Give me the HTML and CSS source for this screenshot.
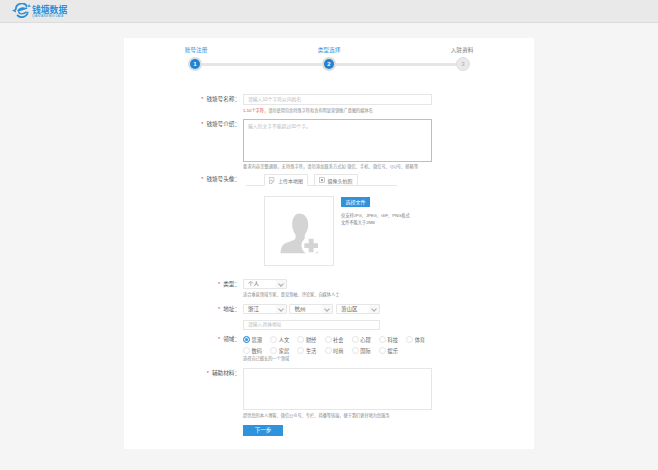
FILE: index.html
```html
<!DOCTYPE html>
<html lang="zh-CN">
<head>
<meta charset="utf-8">
<title>钱塘数据</title>
<link rel="stylesheet" href="styles.css">
</head>
<body>
<header class="topbar">
  <div class="logo">
    <svg class="logo-mark" viewBox="0 0 30 24" width="19" height="15" aria-hidden="true">
      <path d="M6 11 A9.500 9.500 0 0 1 24 6" fill="none" stroke="#2a8fd8" stroke-width="2.800"/>
      <path d="M25 14 A9.500 9.500 0 0 1 8 19" fill="none" stroke="#2a8fd8" stroke-width="2.800"/>
      <path d="M9 13 L24 8 M10 14 C12 19 19 18 23 14 M9 13 C11 8 18 7 21 9" fill="none" stroke="#2a8fd8" stroke-width="2.200"/>
      <path d="M0 12 L6 9 L6 15 Z M27 2 L30 6 L25 6 Z" fill="#2a8fd8"/>
    </svg>
    <div class="logo-text">
      <span class="logo-cn">钱塘数据</span>
      <span class="logo-en">QIANTANG BIG DATA</span>
    </div>
  </div>
</header>

<main class="card">
  <div class="step-labels">
    <span class="step-label active">账号注册</span>
    <span class="step-label active">类型选择</span>
    <span class="step-label">入驻资料</span>
  </div>
  <div class="step-track">
    <span class="dot active">1</span><span class="bar"></span>
    <span class="dot active">2</span><span class="bar"></span>
    <span class="dot">3</span>
  </div>

  <form class="form">
    <div class="row row-name">
      <label class="label"><i>*</i>钱塘号名称：</label>
      <div>
        <div class="input wide">请输入10个字符以内姓名</div>
        <p class="hint hint-name"><b>1-10个字符</b>，请勿使用包含特殊字符和含有明显营销推广意图的媒体名</p>
      </div>
    </div>

    <div class="row row-intro">
      <label class="label"><i>*</i>钱塘号介绍：</label>
      <div>
        <div class="area focus">输入的文字不能超过30个字。</div>
        <p class="hint hint-intro">要求内容完整通顺，无特殊字符，请勿添加联系方式如 微信、手机、微信号、QQ号、邮箱等</p>
      </div>
    </div>

    <div class="row row-avatar">
      <label class="label"><i>*</i>钱塘号头像：</label>
      <div>
        <div class="tabs">
          <span class="tab current">
            <svg viewBox="0 0 8 8" width="7" height="7" aria-hidden="true"><path d="M.5 2.500v-2h5v5h-2M.5 3.500h3v4h-3z" fill="none" stroke="#999" stroke-width=".6"/></svg>
            上传本地图</span>
          <span class="tab">
            <svg viewBox="0 0 8 8" width="6" height="6" aria-hidden="true"><rect x=".5" y="1" width="7" height="6.500" fill="none" stroke="#999" stroke-width=".7"/><circle cx="4" cy="4.200" r="1.500" fill="#999"/></svg>
            摄像头拍照</span>
        </div>
        <div class="upload">
          <div class="avatar">
            <svg viewBox="0 0 70 70" width="68" height="68" aria-hidden="true">
              <path d="M35 17c6 0 9.500 5 9.500 11 0 4-1 7-3 10-1 2-1 5 1 6 5 2 9 3 11 5 2 2 1 6 1 9H16c0-4 1-7 3-9 2-2 7-3 11-5 2-1 2-4 1-6-2-3-3-6-3-10 0-6 3-11 7-11z" fill="#d4d4d4"/>
              <circle cx="47" cy="50" r="9.500" fill="#fff"/>
              <path d="M45 43h5v4.500h4.500v5H50V57h-5v-4.500h-4.500v-5H45z" fill="#d4d4d4"/>
            </svg>
          </div>
          <div class="upload-side">
            <span class="btn-file">选择文件</span>
            <p class="spec">仅支持JPG、JPEG、GIF、PNG格式<br>文件不能大于2MB</p>
          </div>
        </div>
      </div>
    </div>

    <div class="row row-type">
      <label class="label"><i>*</i>类型：</label>
      <div>
        <div class="select">个人<span class="caret"></span></div>
        <p class="hint hint-type">适合垂直领域专家、意见领袖、评论家、自媒体人士</p>
      </div>
    </div>

    <div class="row row-addr">
      <label class="label"><i>*</i>地址：</label>
      <div>
        <div class="selects">
          <div class="select">浙江<span class="caret"></span></div>
          <div class="select">杭州<span class="caret"></span></div>
          <div class="select">萧山区<span class="caret"></span></div>
        </div>
        <div class="input addr">请输入具体地址</div>
      </div>
    </div>

    <div class="row row-field">
      <label class="label"><i>*</i>领域：</label>
      <div>
        <div class="radios">
          <span class="radio on">思潮</span><span class="radio">人文</span><span class="radio">财经</span><span class="radio">社会</span><span class="radio">心理</span><span class="radio">科技</span><span class="radio">体育</span>
          <span class="radio">数码</span><span class="radio">家居</span><span class="radio">生活</span><span class="radio">时尚</span><span class="radio">国际</span><span class="radio">娱乐</span>
        </div>
        <p class="hint hint-field">选择自己擅长的一个领域</p>
      </div>
    </div>

    <div class="row row-extra">
      <label class="label"><i>*</i>辅助材料：</label>
      <div>
        <div class="area plain"></div>
        <p class="hint hint-extra">提供您的本人博客、微信公众号、专栏、荷播等链接，便于我们更好地为您服务</p>
        <span class="btn-next">下一步</span>
      </div>
    </div>
  </form>
</main>
</body>
</html>
```
FILE: styles.css
```css
* { box-sizing: border-box; }
html, body { margin: 0; padding: 0; }
body {
  background: #f5f5f5;
  font-family: "Liberation Sans", "Noto Sans CJK SC", sans-serif;
  color: #666;
  height: 470px;
  overflow: hidden;
}
p { margin: 0; }

.topbar {
  height: 23px;
  background: #e9e9e9;
  border-bottom: 1px solid #dcdcdc;
  padding: 3px 0 0 12px;
}
.logo { display: flex; align-items: flex-start; gap: 1px; }
.logo-mark { display: block; }
.logo-text { display: flex; flex-direction: column; padding-top: 3px; }
.logo-cn { font-size: 8.800px; line-height: 9px; font-weight: 700; color: #2a8fd8; }
.logo-en { font-size: 2.900px; line-height: 3px; color: #2a8fd8; letter-spacing: .15px; white-space: nowrap; }

.card {
  width: 410px;
  height: 411px;
  margin: 15px 0 0 124px;
  background: #fff;
  padding-top: 8px;
}

.step-labels {
  display: flex;
  justify-content: space-between;
  width: 266px;
  margin-left: 72px;
  height: 8px;
}
.step-label {
  width: 0;
  display: flex;
  justify-content: center;
  white-space: nowrap;
  font-size: 5.700px;
  line-height: 8px;
  color: #777;
}
.step-label.active { color: #3a97dc; }

.step-track {
  display: flex;
  align-items: center;
  width: 282px;
  margin: 2px 0 0 64px;
  height: 16px;
}
.bar { flex: 1; height: 3px; background: #e6e6e6; }
.dot {
  flex: none;
  width: 14px;
  height: 14px;
  border-radius: 50%;
  background: #e9e9e9;
  border: 1px solid #ddd;
  color: #aaa;
  font-size: 6px;
  line-height: 12px;
  text-align: center;
}
.dot.active {
  width: 10px;
  height: 10px;
  margin: 0 2px;
  background: #1f82d2;
  border: 0;
  color: #fff;
  font-weight: 700;
  line-height: 10px;
  box-shadow: 0 0 0 2px #dcdcdc;
}

.form { margin-top: 10px; }
.row {
  display: grid;
  grid-template-columns: 114px 1fr;
  column-gap: 5px;
}
.label {
  text-align: right;
  font-size: 5.600px;
  line-height: 11px;
  color: #555;
  white-space: nowrap;
  margin-right: -2px;
}
.label i { font-style: normal; color: #e4393c; margin-right: 3px; }

.input, .area, .select {
  border: 1px solid #e6e6e6;
  background: #fff;
  font-size: 4.800px;
  color: #bbb;
}
.input { height: 11px; line-height: 9px; padding-left: 4px; }
.input.wide { width: 189px; }
.input.addr { width: 137px; height: 10px; line-height: 8px; margin-top: 6px; }
.area { width: 189px; height: 43px; padding: 3px 4px; line-height: 7px; }
.area.focus { border-color: #9cc7e8; }
.area.plain { height: 42px; }

.hint { font-size: 4.200px; line-height: 6px; color: #888; white-space: nowrap; }
.hint b { font-weight: 400; color: #e4393c; }
.hint-name { margin-top: 3px; }
.hint-intro { margin-top: 2px; letter-spacing: .1px; }
.hint-type { margin-top: 3px; }
.hint-extra { margin-top: 3px; }

.row-name { margin-top: 22px; }
.row-intro { margin-top: 5px; }
.row-avatar { margin-top: 4px; }
.row-type { margin-top: 13px; }
.row-addr { margin-top: 6px; }
.row-field { margin-top: 4px; }
.row-extra { margin-top: 6px; }

.tabs {
  display: flex;
  gap: 6px;
  width: 151px;
  height: 12px;
  margin-left: 3px;
  padding-left: 18px;
  border-bottom: 1px solid #e6e6e6;
}
.tab {
  display: flex;
  align-items: center;
  justify-content: center;
  gap: 2px;
  width: 44px;
  height: 12px;
  border: 1px solid #e6e6e6;
  font-size: 5px;
  color: #777;
  white-space: nowrap;
}
.tab.current { border-bottom-color: #fff; }

.upload { display: flex; gap: 7px; margin: 10px 0 0 21px; }
.avatar {
  width: 70px;
  height: 70px;
  border: 1px solid #e6e6e6;
}
.avatar svg { display: block; }
.upload-side { padding-top: 1px; }
.btn-file {
  display: block;
  width: 29px;
  height: 10px;
  background: #2f92dc;
  color: #fff;
  font-size: 5px;
  line-height: 10px;
  text-align: center;
}
.spec { margin-top: 5px; font-size: 4.200px; line-height: 7px; color: #777; white-space: nowrap; }

.select {
  position: relative;
  width: 43.700px;
  height: 10px;
  line-height: 8px;
  padding-left: 4px;
  font-size: 5.500px;
  color: #666;
  border-radius: 1px;
}
.caret {
  position: absolute;
  right: 0;
  top: 0;
  width: 10px;
  height: 8px;
  background: #f8f8f8;
}
.caret::after {
  content: "";
  position: absolute;
  left: 3px;
  top: 1.500px;
  width: 3px;
  height: 3px;
  border-right: 1px solid #aaa;
  border-bottom: 1px solid #aaa;
  transform: rotate(45deg);
}
.selects { display: flex; gap: 2.800px; }

.radios {
  display: grid;
  grid-template-columns: repeat(7, 27.200px);
  grid-auto-rows: 11px;
}
.radio {
  display: flex;
  align-items: center;
  gap: 1.500px;
  font-size: 5.200px;
  color: #666;
  white-space: nowrap;
}
.radio::before {
  content: "";
  flex: none;
  width: 5px;
  height: 5px;
  border: 1px solid #e3e3e3;
  border-radius: 50%;
}
.radio.on::before {
  border-color: #2f92dc;
  background: #2f92dc;
  box-shadow: inset 0 0 0 1px #fff;
}

.btn-next {
  display: block;
  width: 40px;
  height: 11px;
  margin-top: 6px;
  background: #2f92dc;
  color: #fff;
  font-size: 5.500px;
  line-height: 11px;
  text-align: center;
}
```
